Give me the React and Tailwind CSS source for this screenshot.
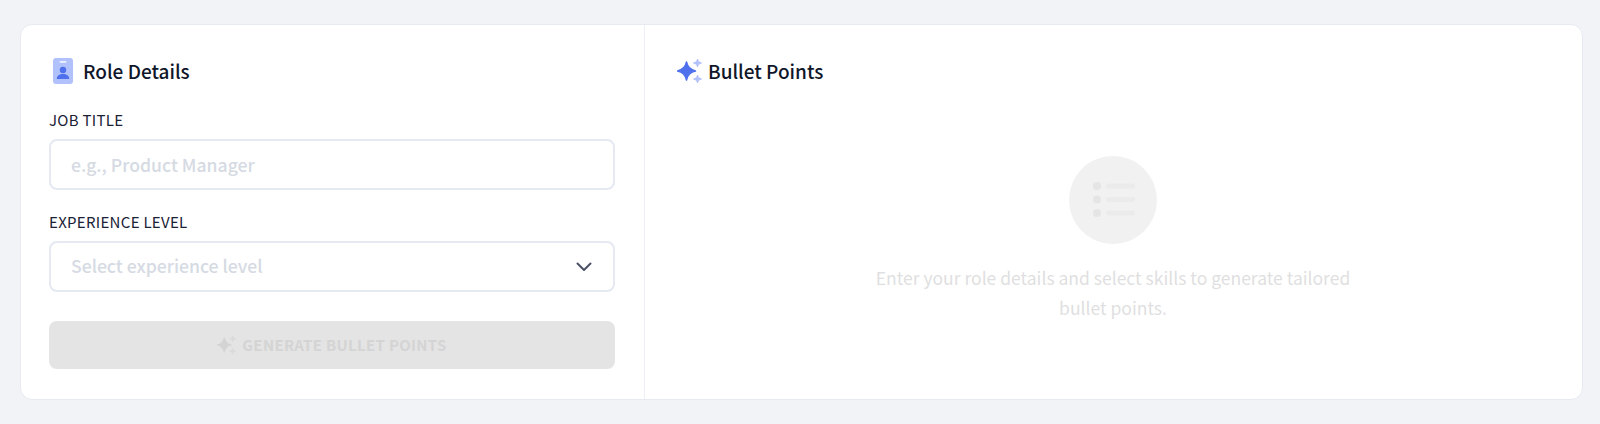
const font = { fontFamily: '"Noto Sans CJK SC", "Noto Sans", sans-serif' }

const Sparkles = ({ main, soft, className }) => (
  <svg viewBox="0 0 26 26" className={className}>
    <path d="M9.500 4c1.100 5.500 3.500 7.900 9 9-5.500 1.100-7.900 3.500-9 9-1.100-5.500-3.500-7.900-9-9 5.500-1.100 7.900-3.500 9-9z" fill={main} stroke={main} strokeWidth="1.500" strokeLinejoin="round" />
    <path d="M20.500 1c.6 2.500 1.500 3.400 4 4-2.500.6-3.400 1.500-4 4-.6-2.500-1.500-3.400-4-4 2.500-.6 3.400-1.500 4-4z" fill={soft} stroke={soft} strokeWidth="1" strokeLinejoin="round" />
    <path d="M20.500 17c.6 2.500 1.500 3.400 4 4-2.500.6-3.400 1.500-4 4-.6-2.500-1.500-3.400-4-4 2.500-.6 3.400-1.500 4-4z" fill={soft} stroke={soft} strokeWidth="1" strokeLinejoin="round" />
  </svg>
)

const BadgeIcon = () => (
  <svg viewBox="0 0 20 26" className="w-5 h-[26px]">
    <rect width="20" height="26" rx="3" fill="#b1c1fb" />
    <rect x="6.500" y="3" width="7" height="1.800" rx="0.900" fill="#eef1fe" />
    <circle cx="10" cy="12" r="3.200" fill="#4f70ed" />
    <path d="M3.800 21c0-3.500 2.700-5 6.200-5s6.200 1.500 6.200 5z" fill="#4f70ed" />
  </svg>
)

const App = () => {
  return (
    <div className="h-[424px] bg-[#f1f3f7] pt-6 pl-5 pr-[17px]" style={font}>
      <div className="flex h-[376px] bg-white border border-[#e7eaf0] rounded-xl">
        <div className="w-[624px] border-r border-[#eef0f5] pl-7 pr-[29px]">
          <div className="flex items-center gap-[10px] h-[30px] mt-[31px] pl-[4px]">
            <BadgeIcon />
            <h2 className="text-[19px] leading-[30px] font-medium text-[#0f1629]">Role Details</h2>
          </div>
          <label className="block mt-[23px] text-[15px] leading-[22px] tracking-[0.3px] text-[#1b2236]">JOB TITLE</label>
          <div className="mt-[8px] h-[51px] border-2 border-[#e4e9f2] rounded-lg flex items-center pl-5 pt-[2px] text-[17.600px] text-[#d5dae3] font-medium">
            e.g., Product Manager
          </div>
          <label className="block mt-[21px] text-[15px] leading-[22px] tracking-[0.3px] text-[#1b2236]">EXPERIENCE LEVEL</label>
          <div className="mt-[8px] h-[51px] border-2 border-[#e4e9f2] rounded-lg flex items-center justify-between pl-5 pr-[21px] text-[17.600px] text-[#d5dae3] font-medium">
            Select experience level
            <svg viewBox="0 0 16 10" className="w-4 h-[10px]" fill="none" stroke="#4b5265" strokeWidth="2" strokeLinecap="round" strokeLinejoin="round">
              <path d="M1.500 1.500 8 8l6.500-6.500" />
            </svg>
          </div>
          <button className="mt-[29px] w-full h-[48px] rounded-lg bg-[#e4e4e4] flex items-center justify-center gap-[5px] text-[15px] font-bold tracking-[0.3px] text-[#d4d4d4]">
            <Sparkles main="#d3d3d3" soft="#dadada" className="w-5 h-5" />
            GENERATE BULLET POINTS
          </button>
        </div>
        <div className="flex-1 pl-[32px]">
          <div className="flex items-center gap-[5px] h-[30px] mt-[31px]">
            <Sparkles main="#4f70ed" soft="#b1c1fb" className="w-[26px] h-[26px]" />
            <h2 className="text-[19px] leading-[30px] font-medium text-[#0f1629]">Bullet Points</h2>
          </div>
          <div className="flex flex-col items-center mt-[70px] pr-[33px]">
            <div className="w-[88px] h-[88px] rounded-full bg-[#f1f1f1] flex items-center justify-center">
              <svg viewBox="0 0 44 36" className="w-[44px] h-[36px]">
                <circle cx="6" cy="4" r="4" fill="#e5e5e5" />
                <circle cx="6" cy="17.500" r="4" fill="#e5e5e5" />
                <circle cx="6" cy="31" r="4" fill="#e5e5e5" />
                <rect x="15" y="1.500" width="29" height="5" rx="2.500" fill="#ebebeb" />
                <rect x="15" y="15" width="29" height="5" rx="2.500" fill="#ebebeb" />
                <rect x="15" y="28.500" width="29" height="5" rx="2.500" fill="#ebebeb" />
              </svg>
            </div>
            <p className="mt-[19px] w-[500px] text-center text-[17.500px] leading-[30px] text-[#dfdfe1]">
              Enter your role details and select skills to generate tailored bullet points.
            </p>
          </div>
        </div>
      </div>
    </div>
  )
}

export default App
